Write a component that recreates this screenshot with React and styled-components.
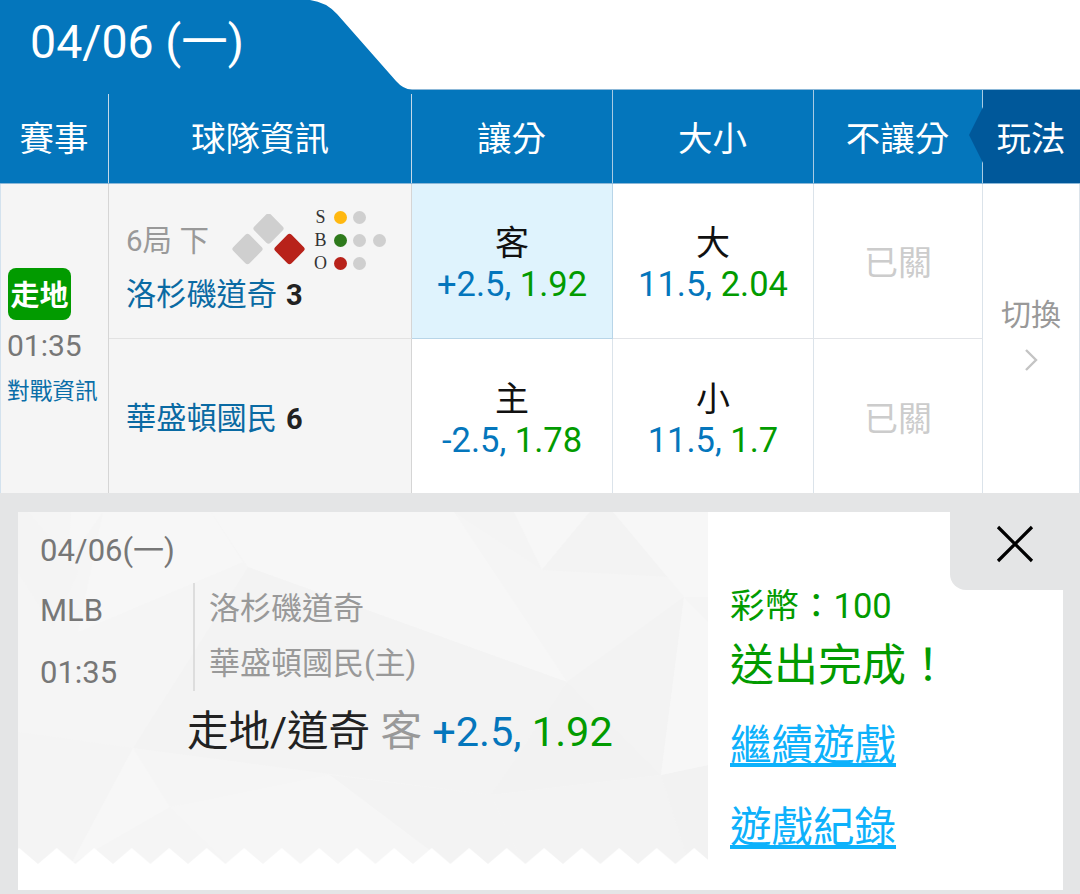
import React from "react";
import styled, { createGlobalStyle } from "styled-components";

const CJK = `Roboto, "Noto Sans CJK TC", sans-serif`;

const GlobalStyle = createGlobalStyle`
  html, body {
    margin: 0;
    padding: 0;
    background: #fff;
    font-family: ${CJK};
  }
`;

const Page = styled.div`
  width: 1080px;
  height: 894px;
  overflow: hidden;
  position: relative;
`;

const DateTab = styled.div`
  position: relative;
  z-index: 1;
  width: 412px;
  height: 90px;
  box-sizing: border-box;
  padding-left: 30px;
  background: #0476bc;
  color: #fff;
  font-size: 46.5px;
  line-height: 84px;
  clip-path: path("M0 0 H310 Q326 2 337 14 L396 81 Q403 89 412 90 H0 Z");
`;

const Grid = styled.div`
  display: grid;
  grid-template-columns: 109px 303px 201px 201px 169px 97px;
`;

const HeadRow = styled(Grid)`
  height: 94px;
  background: #0476bc;
  border-bottom: 1px solid #8cb8d8;
  box-shadow: 0 -1px 0 #8cb8d8;
  box-sizing: border-box;
`;

const HeadCell = styled.div`
  position: relative;
  display: flex;
  align-items: center;
  justify-content: center;
  color: #fff;
  font-size: 34.5px;
  box-sizing: border-box;
  padding: 0 1px 2px 0;
  border-right: ${(p) => (p.$last || p.$short ? "none" : "1px solid #a9cbe3")};
  background: ${(p) =>
    p.$dark
      ? "#00589a"
      : p.$short
      ? "linear-gradient(#c4d9e9, #c4d9e9) right bottom / 1px calc(100% - 4px) no-repeat"
      : "transparent"};

  ${(p) =>
    p.$dark &&
    `&::before {
      content: "";
      position: absolute;
      left: -14px;
      top: 17px;
      width: 14px;
      height: 56px;
      background: #00589a;
      clip-path: polygon(100% 0, 0 50%, 100% 100%);
    }`}
`;

const BodyGrid = styled(Grid)`
  grid-template-rows: 155px 154px;
  height: 309px;
`;

const InfoCell = styled.div`
  grid-row: span 2;
  background: #f5f5f5;
  border-left: 1px solid #d3e2ee;
  border-right: 1px solid #d5d5d5;
  box-sizing: border-box;
  padding: 84px 0 0 7px;
  display: flex;
  flex-direction: column;
  align-items: flex-start;
`;

const LiveBadge = styled.div`
  width: 63px;
  height: 52px;
  border-radius: 8px;
  background: #029b00;
  color: #fff;
  font-size: 29px;
  font-weight: 700;
  padding-bottom: 3px;
  box-sizing: border-box;
  display: flex;
  align-items: center;
  justify-content: center;
`;

const MatchTime = styled.div`
  margin: 8px 0 0 -1px;
  color: #777;
  font-size: 30px;
  line-height: 36px;
`;

const MatchLink = styled.div`
  margin: 12px 0 0 -1px;
  color: #0a6ea8;
  font-size: 22.7px;
  line-height: 32px;
  white-space: nowrap;
`;

const TeamCell = styled.div`
  background: #f5f5f5;
  border-right: 1px solid #d5d5d5;
  border-bottom: ${(p) => (p.$top ? "1px solid #e2e2e2" : "none")};
  box-sizing: border-box;
  padding-left: 17px;
  display: flex;
  flex-direction: column;
  justify-content: ${(p) => (p.$top ? "flex-start" : "center")};
  padding-top: ${(p) => (p.$top ? "20px" : "6px")};
`;

const InningRow = styled.div`
  display: flex;
  align-items: flex-start;
  height: 70px;
`;

const Inning = styled.div`
  width: 106px;
  margin-top: 17px;
  color: #999;
  font-size: 29.5px;
  line-height: 40px;
  white-space: pre;
`;

const Sbo = styled.div`
  margin-left: 6px;
  display: grid;
  grid-template-columns: repeat(4, 13px);
  grid-auto-rows: 23px;
  column-gap: 6.5px;
  align-items: center;
  justify-items: center;
  margin-top: 2px;
`;

const SboLetter = styled.span`
  font-family: "Liberation Serif", serif;
  color: #333;
  font-size: 18px;
  line-height: 23px;
`;

const Dot = styled.span`
  width: 13px;
  height: 13px;
  border-radius: 50%;
  background: ${(p) => p.$color || "#cfcfcf"};
`;

const TeamName = styled.div`
  color: #0a6aa3;
  font-size: 30.2px;
  line-height: 42px;
  display: flex;
  align-items: center;
`;

const Score = styled.b`
  margin-left: 9px;
  color: #222;
  font-size: 29px;
  font-weight: 700;
`;

const OddsCell = styled.div`
  box-sizing: border-box;
  display: flex;
  flex-direction: column;
  align-items: center;
  justify-content: center;
  padding-top: ${(p) => (p.$active || p.$top ? "6px" : "8px")};
  background: ${(p) => (p.$active ? "#dff3fd" : "#fff")};
  border-right: 1px solid ${(p) => (p.$active ? "#b8d5e8" : "#dbe3ea")};
  border-bottom: ${(p) =>
    p.$active ? "1px solid #b8d5e8" : p.$top ? "1px solid #e2e4e8" : "none"};
`;

const Side = styled.div`
  color: #111;
  font-size: 34px;
  line-height: 40px;
`;

const Odds = styled.div`
  font-size: 34.5px;
  line-height: 42px;
  white-space: pre;
`;

const Blue = styled.span`
  color: #0476bc;
`;

const Green = styled.span`
  color: #029b00;
`;

const Closed = styled(OddsCell)`
  color: #ccc;
  font-size: 34px;
  padding-top: 0;
  padding-bottom: ${(p) => (p.$top ? "2px" : "0")};
`;

const SwitchCell = styled.div`
  grid-row: span 2;
  border-right: 1px solid #dbe3ea;
  box-sizing: border-box;
  display: flex;
  flex-direction: column;
  align-items: center;
  justify-content: center;
  color: #999;
  font-size: 30px;
  gap: 14px;
  padding-bottom: 15px;
`;

const Tray = styled.div`
  height: 401px;
  box-sizing: border-box;
  background: #e4e5e6;
  padding: 19px 17px 4px 18px;
`;

const Ticket = styled.div`
  height: 378px;
  display: grid;
  grid-template-columns: 690px 1fr;
  background: #fff;
`;

const TicketLeft = styled.div`
  position: relative;
  padding: 20px 0 0 22px;
  color: #777;
  font-size: 31px;
`;

const Backdrop = styled.svg`
  position: absolute;
  left: 0;
  top: 0;
`;

const TicketLayer = styled.div`
  position: relative;
`;

const TicketDate = styled.div`
  line-height: 38px;
`;

const MetaRow = styled.div`
  display: flex;
  margin-top: 13px;
`;

const MetaLeft = styled.div`
  width: 153px;
  display: flex;
  flex-direction: column;
  gap: 26px;
  line-height: 36px;
  padding-top: 10px;
`;

const Teams = styled.div`
  border-left: 2px solid #ddd;
  padding-left: 14px;
  height: 108px;
  color: #999;
  line-height: 55px;
  box-sizing: border-box;
`;

const TeamLines = styled.div`
  margin-top: -2px;
`;

const BetLine = styled.div`
  margin: 18px 0 0 147px;
  font-size: 41.5px;
  line-height: 46px;
  color: #222;
  white-space: pre;
`;

const BetSide = styled.span`
  color: #999;
`;

const TicketRight = styled.div`
  padding: 71px 0 0 22px;
  color: #029b00;
`;

const Coins = styled.div`
  font-size: 34.5px;
  line-height: 46px;
`;

const Done = styled.div`
  font-size: 44px;
  line-height: 60px;
  margin-top: 7px;
`;

const ActionLink = styled.a`
  display: block;
  width: max-content;
  margin-top: ${(p) => p.$mt}px;
  color: #0db1fb;
  font-size: 41.5px;
  line-height: 50px;
  text-decoration: underline;
`;

const CloseTab = styled.div`
  position: absolute;
  right: 0;
  top: 512px;
  width: 130px;
  height: 78px;
  box-sizing: border-box;
  padding-top: 13px;
  background: #e4e5e6;
  border-bottom-left-radius: 16px;
  display: flex;
  justify-content: center;
`;

const Diamonds = () => (
  <svg width="76" height="58" viewBox="0 0 76 58" style={{ flex: "none", marginTop: "10px" }}>
    <rect x="25" y="3" width="23" height="23" rx="3" fill="#cfcfcf" transform="rotate(45 36.5 14.5)" />
    <rect x="4" y="23.5" width="23" height="23" rx="3" fill="#cfcfcf" transform="rotate(45 15.5 35)" />
    <rect x="46" y="23.5" width="23" height="23" rx="3" fill="#b8221a" transform="rotate(45 57.5 35)" />
  </svg>
);

const Chevron = () => (
  <svg width="14" height="24" viewBox="0 0 14 24">
    <path d="M2 2 L12 12 L2 22" fill="none" stroke="#c4c4c4" strokeWidth="2.4" />
  </svg>
);

const CloseIcon = () => (
  <svg width="38" height="38" viewBox="0 0 38 38">
    <path d="M2 2 L36 36 M36 2 L2 36" fill="none" stroke="#000" strokeWidth="3.2" />
  </svg>
);

const Polygons = () => (
  <Backdrop width="690" height="378" viewBox="0 0 690 378">
    <defs>
      <pattern id="zig" x="1.2" y="336" width="37.5" height="16" patternUnits="userSpaceOnUse">
        <path d="M0 0 L18.75 16 H0 Z M37.5 0 L18.75 16 H37.5 Z" fill="#fff" />
      </pattern>
    </defs>
    <rect width="690" height="352" fill="#f5f5f5" />
    <polygon points="0,0 10,0 60,60 35,115 0,60" fill="#f4f4f4" />
    <polygon points="53,0 85,0 50,50" fill="#f7f7f7" />
    <polygon points="85,0 193,0 225,50 60,120" fill="#f7f7f7" />
    <polygon points="193,0 436,0 549,170 230,55" fill="#f7f7f7" />
    <polygon points="230,55 115,236 473,283 549,170" fill="#f3f3f3" />
    <polygon points="436,0 496,0 524,58" fill="#f4f4f4" />
    <polygon points="496,0 572,0 524,58" fill="#f7f7f7" />
    <polygon points="572,0 595,0 652,65 524,58" fill="#f3f3f3" />
    <polygon points="595,0 690,0 690,85 666,85" fill="#f7f7f7" />
    <polygon points="549,170 643,263 666,85" fill="#f3f3f3" />
    <polygon points="549,170 473,283 643,263" fill="#f2f2f2" />
    <polygon points="0,220 115,236 53,352 0,352" fill="#f4f4f4" />
    <polygon points="115,236 152,295 53,352" fill="#f7f7f7" />
    <polygon points="152,295 312,263 430,352 210,352" fill="#f6f6f6" />
    <polygon points="312,263 473,283 505,352 430,352" fill="#f3f3f3" />
    <polygon points="473,283 643,263 671,352 505,352" fill="#f3f3f3" />
    <polygon points="643,263 690,253 690,352 671,352" fill="#f2f2f2" />
    <polygon points="666,85 690,110 690,253 643,263" fill="#f7f7f7" />
    <rect y="336" width="690" height="16" fill="url(#zig)" />
  </Backdrop>
);

const App = () => {
  return (
    <Page>
      <GlobalStyle />
      <DateTab>04/06 (一)</DateTab>
      <HeadRow>
        <HeadCell $short>賽事</HeadCell>
        <HeadCell $short>球隊資訊</HeadCell>
        <HeadCell>讓分</HeadCell>
        <HeadCell>大小</HeadCell>
        <HeadCell>不讓分</HeadCell>
        <HeadCell $dark $last>玩法</HeadCell>
      </HeadRow>
      <BodyGrid>
        <InfoCell>
          <LiveBadge>走地</LiveBadge>
          <MatchTime>01:35</MatchTime>
          <MatchLink>對戰資訊</MatchLink>
        </InfoCell>
        <TeamCell $top>
          <InningRow>
            <Inning>6局 下</Inning>
            <Diamonds />
            <Sbo>
              <SboLetter>S</SboLetter>
              <Dot $color="#ffb810" />
              <Dot />
              <span />
              <SboLetter>B</SboLetter>
              <Dot $color="#2e7a1c" />
              <Dot />
              <Dot />
              <SboLetter>O</SboLetter>
              <Dot $color="#b8221a" />
              <Dot />
            </Sbo>
          </InningRow>
          <TeamName>洛杉磯道奇<Score>3</Score></TeamName>
        </TeamCell>
        <OddsCell $active>
          <Side>客</Side>
          <Odds><Blue>+2.5, </Blue><Green>1.92</Green></Odds>
        </OddsCell>
        <OddsCell $top>
          <Side>大</Side>
          <Odds><Blue>11.5, </Blue><Green>2.04</Green></Odds>
        </OddsCell>
        <Closed $top>已關</Closed>
        <SwitchCell>
          切換
          <Chevron />
        </SwitchCell>
        <TeamCell>
          <TeamName>華盛頓國民<Score>6</Score></TeamName>
        </TeamCell>
        <OddsCell>
          <Side>主</Side>
          <Odds><Blue>-2.5, </Blue><Green>1.78</Green></Odds>
        </OddsCell>
        <OddsCell>
          <Side>小</Side>
          <Odds><Blue>11.5, </Blue><Green>1.7</Green></Odds>
        </OddsCell>
        <Closed>已關</Closed>
      </BodyGrid>
      <Tray>
        <Ticket>
          <TicketLeft>
            <Polygons />
            <TicketLayer>
              <TicketDate>04/06(一)</TicketDate>
              <MetaRow>
                <MetaLeft>
                  <span>MLB</span>
                  <span>01:35</span>
                </MetaLeft>
                <Teams>
                  <TeamLines>
                    洛杉磯道奇
                    <br />
                    華盛頓國民(主)
                  </TeamLines>
                </Teams>
              </MetaRow>
              <BetLine>
                走地/道奇 <BetSide>客</BetSide> <Blue>+2.5, </Blue><Green>1.92</Green>
              </BetLine>
            </TicketLayer>
          </TicketLeft>
          <TicketRight>
            <Coins>彩幣：100</Coins>
            <Done>送出完成！</Done>
            <ActionLink $mt={25}>繼續遊戲</ActionLink>
            <ActionLink $mt={32}>遊戲紀錄</ActionLink>
          </TicketRight>
        </Ticket>
      </Tray>
      <CloseTab>
        <CloseIcon />
      </CloseTab>
    </Page>
  );
};

export default App;
